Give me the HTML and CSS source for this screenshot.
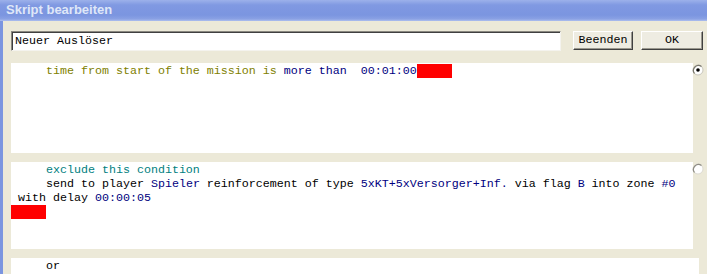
FILE: index.html
```html
<!DOCTYPE html>
<html>
<head>
<meta charset="utf-8">
<link rel="stylesheet" href="styles.css">
</head>
<body>
<div class="window">
  <div class="titlebar">Skript bearbeiten</div>
  <div class="client">
    <div class="toolbar">
      <div class="textbox">Neuer Auslöser</div>
      <div class="btn btn-beenden">Beenden</div>
      <div class="btn btn-ok">OK</div>
    </div>
    <div class="rows">
      <div class="row">
        <div class="panel h1">
          <div class="line"><span class="olive">     time from start of the mission is </span><span class="navy">more than  00:01:00</span><span class="redbox"></span></div>
        </div>
        <div class="radio">
          <svg width="12" height="12" viewBox="0 0 12 12"><circle cx="6" cy="6" r="5" fill="#fff" stroke="#c8c6bc"/><path d="M2.5 9.5 A5 5 0 0 1 9.5 2.5" fill="none" stroke="#7a786e" stroke-width="1.2"/><circle cx="6" cy="6" r="1.8" fill="#000"/></svg>
        </div>
      </div>
      <div class="row">
        <div class="panel h2">
          <div class="line teal">     exclude this condition</div>
          <div class="line">     send to player <span class="navy">Spieler</span> reinforcement of type <span class="navy">5xKT+5xVersorger+Inf.</span> via flag <span class="navy">B</span> into zone <span class="navy">#0</span></div>
          <div class="line"> with delay <span class="navy">00:00:05</span></div>
          <div class="line"><span class="redbox"></span></div>
        </div>
        <div class="radio">
          <svg width="12" height="12" viewBox="0 0 12 12"><circle cx="6" cy="6" r="5" fill="#fff" stroke="#dcdad2"/><path d="M2.5 9.5 A5 5 0 0 1 9.5 2.5" fill="none" stroke="#8e8c84" stroke-width="1.2"/></svg>
        </div>
      </div>
      <div class="row">
        <div class="panel h3">
          <div class="line">     or</div>
        </div>
      </div>
    </div>
  </div>
</div>
</body>
</html>
```
FILE: styles.css
```css
html, body {
  margin: 0;
  padding: 0;
  width: 707px;
  height: 274px;
  overflow: hidden;
  background: #ece9d8;
}
.window {
  width: 707px;
  height: 274px;
  display: flex;
  flex-direction: column;
  overflow: hidden;
}
.titlebar {
  height: 21px;
  box-sizing: border-box;
  padding-left: 6px;
  line-height: 20px;
  font-family: "Liberation Sans", Arial, sans-serif;
  font-weight: bold;
  font-size: 13px;
  color: #dfe7f8;
  background: linear-gradient(#9cb1ea 0px, #8099e2 5px, #7b95e0 15px, #8aa1e4 19px, #aebfee 21px);
}
.client {
  flex: 1;
  min-height: 0;
  overflow: hidden;
  border-left: 3px solid #7b95e0;
  padding-left: 8px;
  padding-top: 10px;
  font-family: "Liberation Mono", "Courier New", monospace;
  font-size: 11.67px;
}
.toolbar {
  display: flex;
  align-items: flex-start;
  height: 20px;
}
.textbox {
  width: 550px;
  height: 20px;
  box-sizing: border-box;
  background: #fff;
  border-top: 1px solid #8a8880;
  border-left: 1px solid #8a8880;
  border-bottom: 1px solid #f4f3ee;
  border-right: 1px solid #f4f3ee;
  box-shadow: inset 1px 1px 0 #404040;
  padding-left: 3px;
  line-height: 18px;
  color: #000;
  white-space: pre;
}
.btn {
  height: 19px;
  box-sizing: border-box;
  background: #eeece2;
  border-top: 1px solid #fff;
  border-left: 1px solid #fff;
  border-right: 1px solid #404040;
  border-bottom: 1px solid #404040;
  box-shadow: inset -1px -1px 0 #9a988e;
  text-align: center;
  line-height: 17px;
  color: #000;
}
.btn-beenden {
  width: 60px;
  margin-left: 12px;
}
.btn-ok {
  width: 62px;
  margin-left: 8px;
}
.rows {
  margin-top: 12px;
  display: flex;
  flex-direction: column;
  gap: 9px;
}
.row {
  display: flex;
  align-items: flex-start;
}
.panel {
  width: 682px;
  background: #fff;
  padding-top: 1px;
  box-sizing: border-box;
}
.h1 { height: 90px; }
.h2 { height: 87px; }
.h3 { height: 16px; width: 688px; }
.line {
  height: 14px;
  line-height: 14px;
  white-space: pre;
  color: #000;
}
.radio {
  width: 12px;
  height: 12px;
  margin-left: -1px;
  margin-top: 1px;
}
.radio svg { display: block; }
.olive { color: #808000; }
.navy { color: #000080; }
.teal { color: #008080; }
.redbox {
  display: inline-block;
  width: 35px;
  height: 14px;
  background: #ff0000;
  vertical-align: top;
}
```
